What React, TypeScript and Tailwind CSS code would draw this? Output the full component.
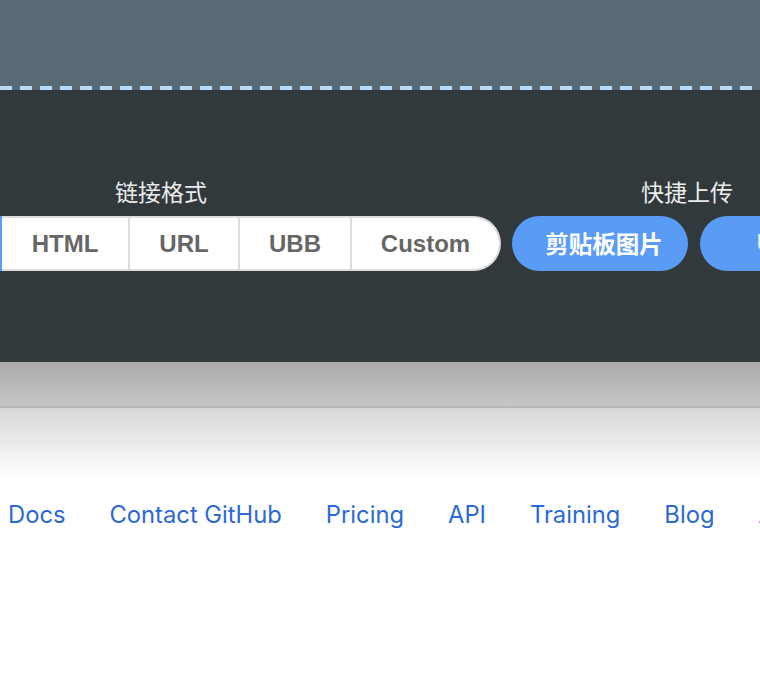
const cells = [
  { label: "HTML", w: "w-[128px]" },
  { label: "URL", w: "w-[110px]" },
  { label: "UBB", w: "w-[112px]" },
];

const links = ["Docs", "Contact GitHub", "Pricing", "API", "Training", "Blog", "About"];

export default function App() {
  return (
    <div className="w-[760px] h-[680px] overflow-hidden bg-white" style={{ fontFamily: '"Liberation Sans", "Noto Sans CJK SC", sans-serif' }}>
      <div className="h-[86px] bg-[#5a6a75]" />
      <div className="h-[4px] bg-[#32393d] bg-[repeating-linear-gradient(90deg,#b6dbf8_0_12px,#5a6a75_12px_20px)]" />
      <div className="h-[272px] bg-[#32393d] pt-[86px]">
        <div className="flex items-end gap-[11px] ml-[-179px]">
          <div className="flex flex-col items-center">
            <div className="text-[23px] leading-[30px] text-[#ececec] mb-[10px] font-['Noto_Sans_CJK_SC']">链接格式</div>
            <div className="flex h-[55px]">
              <div className="w-[181px] rounded-l-full border-2 border-[#5a9cf5] bg-white flex items-center justify-center text-[24px] font-bold text-[#666]">
                Markdown
              </div>
              {cells.map((c) => (
                <div
                  key={c.label}
                  className={`${c.w} border-y-2 border-r-2 border-[#dcdcde] bg-white flex items-center justify-center text-[24px] font-bold text-[#666]`}
                >
                  {c.label}
                </div>
              ))}
              <div className="w-[149px] rounded-r-full border-y-2 border-r-2 border-[#dcdcde] bg-white flex items-center justify-center text-[24px] font-bold text-[#666]">
                Custom
              </div>
            </div>
          </div>
          <div className="flex flex-col items-center shrink-0">
            <div className="text-[23px] leading-[30px] text-[#ececec] mb-[10px] font-['Noto_Sans_CJK_SC']">快捷上传</div>
            <div className="flex gap-[12px]">
              <button className="w-[176px] h-[55px] rounded-full bg-[#5a9cf5] pl-[8px] text-white text-[23.5px] font-bold font-['Noto_Sans_CJK_SC']">
                剪贴板图片
              </button>
              <button className="w-[162px] h-[55px] rounded-full bg-[#5a9cf5] text-white text-[23px] font-bold text-left pl-[57px] whitespace-nowrap">
                URL上传
              </button>
            </div>
          </div>
        </div>
      </div>
      <div className="h-[44px] bg-linear-to-b from-[#aaaaaa] to-[#c6c6c6]" />
      <div className="h-[2px] bg-[#b5b8bb]" />
      <div className="h-[72px] bg-linear-to-b from-[#d8d8d8] to-white" />
      <nav className="flex gap-[44px] pl-[8px] pt-[17px] whitespace-nowrap text-[23.75px] text-[#2d69d3] font-['Inter']">
        {links.map((l) => (
          <a key={l} href="#">{l}</a>
        ))}
      </nav>
    </div>
  );
}
